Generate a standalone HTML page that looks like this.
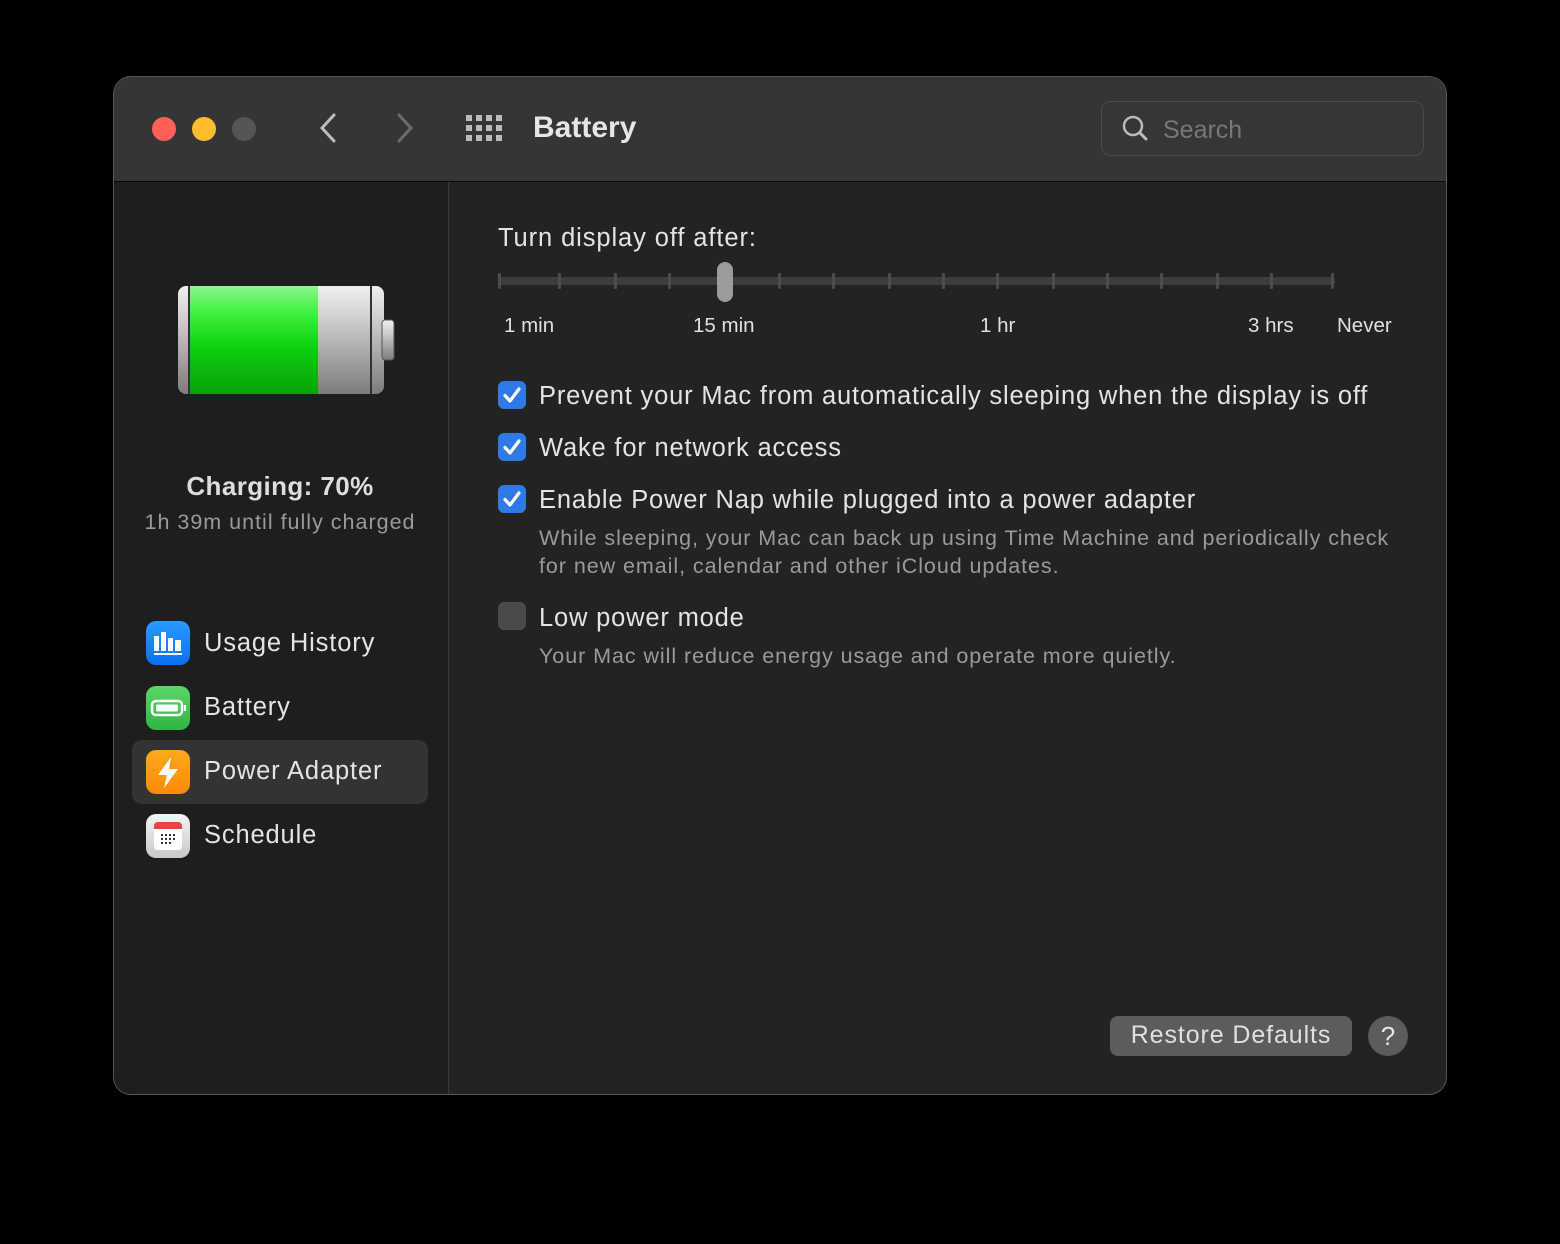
<!DOCTYPE html>
<html><head><meta charset="utf-8">
<style>
*{margin:0;padding:0;box-sizing:border-box}
body{width:1560px;height:1244px;background:#000;font-family:"Liberation Sans",sans-serif;position:relative;overflow:hidden}
.win{position:absolute;left:113px;top:76px;width:1334px;height:1019px;border-radius:18px;background:#232323;border:1px solid #555;overflow:hidden}
.tb{position:absolute;left:0;top:0;width:100%;height:105px;background:#353535;border-bottom:1px solid #0c0c0c}
.side{position:absolute;left:0;top:105px;width:335px;bottom:0;background:#1e1e1e;border-right:1px solid #3a3a3a}
.abs{position:absolute}
.dot{position:absolute;width:24px;height:24px;border-radius:50%;top:40px}
.t{position:absolute;color:#e0e0e0;white-space:nowrap}
.tick{position:absolute;top:273px;width:3px;height:16px;background:#4c4c4c;border-radius:1px}
.cb{position:absolute;left:498px;width:28px;height:28px;border-radius:6px;background:#2f7ae5}
.sub{position:absolute;color:#9a9a9a;font-size:21.5px;left:539px;line-height:28px;white-space:nowrap;letter-spacing:0.94px}
.opt{position:absolute;left:539px;color:#e4e4e4;font-size:25.5px;white-space:nowrap;letter-spacing:0.82px}
.ic{position:absolute;left:146px;width:44px;height:44px;border-radius:10px}
.nav{position:absolute;left:204px;font-size:25.5px;color:#e4e4e4;letter-spacing:0.85px}
</style></head><body>
<div class="win">
 <div class="tb">
  <div class="dot" style="left:38px;background:#fe5f57"></div>
  <div class="dot" style="left:78px;background:#febc2e"></div>
  <div class="dot" style="left:118px;background:#555"></div>
  <svg class="abs" style="left:200px;top:34px" width="30" height="34"><path d="M20 4 L8 17 L20 30" stroke="#bdbdbd" stroke-width="3" fill="none" stroke-linecap="round"/></svg>
  <svg class="abs" style="left:276px;top:34px" width="30" height="34"><path d="M9 4 L21 17 L9 30" stroke="#6c6c6c" stroke-width="3" fill="none" stroke-linecap="round"/></svg>
  <svg class="abs" style="left:352px;top:38px" width="38" height="28" fill="#bbb">
   <rect x="0" y="0" width="6" height="6"/><rect x="10" y="0" width="6" height="6"/><rect x="20" y="0" width="6" height="6"/><rect x="30" y="0" width="6" height="6"/>
   <rect x="0" y="10" width="6" height="6"/><rect x="10" y="10" width="6" height="6"/><rect x="20" y="10" width="6" height="6"/><rect x="30" y="10" width="6" height="6"/>
   <rect x="0" y="20" width="6" height="6"/><rect x="10" y="20" width="6" height="6"/><rect x="20" y="20" width="6" height="6"/><rect x="30" y="20" width="6" height="6"/>
  </svg>
  <div class="t" style="left:419px;top:34px;font-size:30px;font-weight:bold;color:#e6e6e6">Battery</div>
  <div class="abs" style="left:987px;top:24px;width:323px;height:55px;border:1px solid #4a4a4a;border-radius:10px;background:#363636"></div>
  <svg class="abs" style="left:1007px;top:37px" width="30" height="30"><circle cx="12" cy="12" r="9" stroke="#bbb" stroke-width="2.5" fill="none"/><path d="M18.5 18.5 L25 25" stroke="#bbb" stroke-width="3" stroke-linecap="round"/></svg>
  <div class="t" style="left:1049px;top:39px;font-size:25px;color:#777">Search</div>
 </div>
 <div class="side"></div>
</div>
<!-- battery -->
<svg class="abs" style="left:176px;top:284px" width="220" height="112">
 <defs>
  <linearGradient id="g" x1="0" y1="0" x2="0" y2="1"><stop offset="0" stop-color="#8ef58e"/><stop offset=".25" stop-color="#3ef23e"/><stop offset=".6" stop-color="#0ccc0c"/><stop offset="1" stop-color="#06a306"/></linearGradient>
  <linearGradient id="s" x1="0" y1="0" x2="0" y2="1"><stop offset="0" stop-color="#f0f0f0"/><stop offset=".3" stop-color="#cfcfcf"/><stop offset="1" stop-color="#7c7c7c"/></linearGradient>
 </defs>
 <rect x="2" y="2" width="206" height="108" rx="8" fill="url(#s)"/>
 <rect x="14" y="2" width="128" height="108" fill="url(#g)"/>
 <rect x="12" y="2" width="2" height="108" fill="#333"/>
 <rect x="194" y="2" width="2" height="108" fill="#333"/>
 <rect x="206" y="36" width="12" height="40" rx="3" fill="url(#s)" stroke="#555"/>
</svg>
<div class="t" style="left:0;width:560px;text-align:center;top:471px;font-size:26px;font-weight:bold;color:#ddd;letter-spacing:0.4px">Charging: 70%</div>
<div class="t" style="left:0;width:560px;text-align:center;top:510px;font-size:21.5px;color:#9a9a9a;letter-spacing:1px">1h 39m until fully charged</div>
<!-- sidebar nav -->
<div class="abs" style="left:132px;top:740px;width:296px;height:64px;border-radius:10px;background:#333"></div>
<div class="ic" style="top:621px;background:linear-gradient(#2b9bff,#0a6ff0)">
 <svg width="44" height="44"><g fill="#fff"><rect x="8" y="15" width="5" height="15"/><rect x="15" y="11" width="5" height="19"/><rect x="22" y="17" width="5" height="13"/><rect x="29" y="19" width="6" height="11"/><rect x="8" y="32" width="28" height="2"/></g></svg></div>
<div class="nav" style="top:629px">Usage History</div>
<div class="ic" style="top:686px;background:linear-gradient(#5cd668,#2fb544)">
 <svg width="44" height="44"><rect x="6" y="15" width="30" height="14" rx="4" stroke="#fff" stroke-width="2.5" fill="none"/><rect x="10" y="18.5" width="22" height="7" rx="1.5" fill="#fff"/><rect x="38" y="19" width="2" height="6" fill="#fff"/></svg></div>
<div class="nav" style="top:693px">Battery</div>
<div class="ic" style="top:750px;background:linear-gradient(#ffa91c,#fb8a05)">
 <svg width="44" height="44"><path d="M25 7 L12 25 H21 L18 38 L32 19 H23 Z" fill="#fff"/></svg></div>
<div class="nav" style="top:757px">Power Adapter</div>
<div class="ic" style="top:814px;background:linear-gradient(#f4f4f4,#c9c9c9)">
 <svg width="44" height="44"><rect x="8" y="8" width="28" height="28" rx="4" fill="#fff"/><path d="M8 12 a4 4 0 0 1 4 -4 h20 a4 4 0 0 1 4 4 v3 h-28z" fill="#e8453c"/><g fill="#333"><rect x="15" y="20" width="2" height="2"/><rect x="19" y="20" width="2" height="2"/><rect x="23" y="20" width="2" height="2"/><rect x="27" y="20" width="2" height="2"/><rect x="15" y="24" width="2" height="2"/><rect x="19" y="24" width="2" height="2"/><rect x="23" y="24" width="2" height="2"/><rect x="27" y="24" width="2" height="2"/><rect x="15" y="28" width="2" height="2"/><rect x="19" y="28" width="2" height="2"/><rect x="23" y="28" width="2" height="2"/></g></svg></div>
<div class="nav" style="top:821px">Schedule</div>
<!-- main -->
<div class="t" style="left:498px;top:224px;font-size:25.5px;color:#e4e4e4;letter-spacing:0.9px">Turn display off after:</div>
<div class="abs" style="left:499px;top:277px;width:836px;height:8px;background:#3d3d3d;border-radius:3px"></div>
<div class="tick" style="left:498px"></div><div class="tick" style="left:558px"></div><div class="tick" style="left:614px"></div><div class="tick" style="left:668px"></div>
<div class="tick" style="left:778px"></div><div class="tick" style="left:832px"></div><div class="tick" style="left:888px"></div><div class="tick" style="left:942px"></div>
<div class="tick" style="left:996px"></div><div class="tick" style="left:1052px"></div><div class="tick" style="left:1106px"></div><div class="tick" style="left:1160px"></div>
<div class="tick" style="left:1216px"></div><div class="tick" style="left:1270px"></div><div class="tick" style="left:1331px"></div>
<div class="abs" style="left:717px;top:262px;width:16px;height:40px;border-radius:8px;background:#9b9b9b"></div>
<div class="t" style="left:504px;top:314px;font-size:20.5px">1 min</div>
<div class="t" style="left:693px;top:314px;font-size:20.5px">15 min</div>
<div class="t" style="left:980px;top:314px;font-size:20.5px">1 hr</div>
<div class="t" style="left:1248px;top:314px;font-size:20.5px">3 hrs</div>
<div class="t" style="left:1337px;top:314px;font-size:20.5px">Never</div>
<div class="cb" style="top:381px"><svg width="28" height="28"><path d="M7 14.5 L12 20 L21 8" stroke="#fff" stroke-width="3.2" fill="none" stroke-linecap="round" stroke-linejoin="round"/></svg></div>
<div class="opt" style="top:382px">Prevent your Mac from automatically sleeping when the display is off</div>
<div class="cb" style="top:433px"><svg width="28" height="28"><path d="M7 14.5 L12 20 L21 8" stroke="#fff" stroke-width="3.2" fill="none" stroke-linecap="round" stroke-linejoin="round"/></svg></div>
<div class="opt" style="top:434px">Wake for network access</div>
<div class="cb" style="top:485px"><svg width="28" height="28"><path d="M7 14.5 L12 20 L21 8" stroke="#fff" stroke-width="3.2" fill="none" stroke-linecap="round" stroke-linejoin="round"/></svg></div>
<div class="opt" style="top:486px">Enable Power Nap while plugged into a power adapter</div>
<div class="sub" style="top:524px">While sleeping, your Mac can back up using Time Machine and periodically check<br>for new email, calendar and other iCloud updates.</div>
<div class="cb" style="top:602px;background:#4a4a4a"></div>
<div class="opt" style="top:604px">Low power mode</div>
<div class="sub" style="top:642px">Your Mac will reduce energy usage and operate more quietly.</div>
<div class="abs" style="left:1110px;top:1016px;width:242px;height:40px;border-radius:8px;background:#5c5c5c"></div>
<div class="t" style="left:1110px;width:242px;text-align:center;top:1021px;font-size:25px;letter-spacing:0.9px">Restore Defaults</div>
<div class="abs" style="left:1368px;top:1016px;width:40px;height:40px;border-radius:50%;background:#5c5c5c;color:#e6e6e6;font-size:26px;text-align:center;line-height:40px">?</div>
</body></html>
